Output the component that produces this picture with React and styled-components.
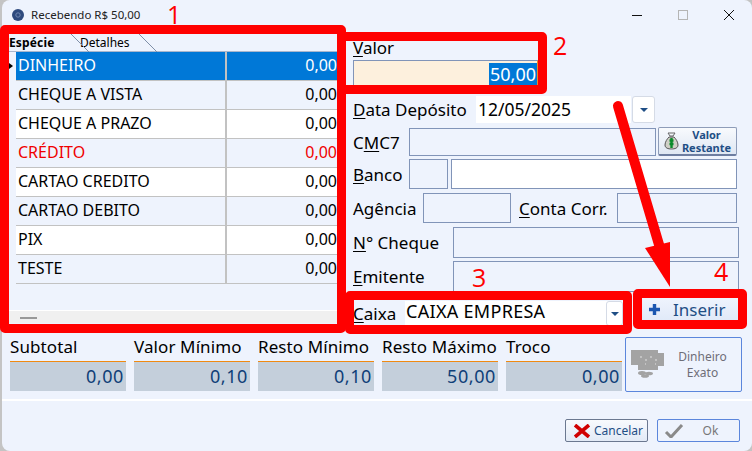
import React from "react";
import styled, { createGlobalStyle } from "styled-components";

const Global = createGlobalStyle`
  html, body { margin: 0; padding: 0; background: #c4c4c4; overflow: hidden; }
  * { box-sizing: border-box; }
`;
const UI = `"Noto Sans", "Open Sans", sans-serif`;

const Win = styled.div`
  position: relative; width: 750px; height: 451px; margin-left: 2px; background: #eef3fd;
  border-radius: 8px;
  font-family: ${UI}; font-size: 17px; color: #000; display: flex; flex-direction: column;
`;
const TitleBar = styled.div`
  height: 30px; flex: none; display: flex; align-items: center; padding-left: 10px;
  font-size: 11.5px; color: #222; gap: 7px;
`;
const TitleText = styled.span`flex: 1; margin-top: -1px;`;
const Ctl = styled.svg`width: 12px; height: 12px; margin-right: ${p => p.$mr}px; flex: none;`;
const Main = styled.div`height: 304px; flex: none; display: flex; padding: 4px 0 0 7px;`;
const Left = styled.div`width: 329px; height: 289px; display: flex; flex-direction: column; flex: none; position: relative; font-size: 16px;`;
const Tabs = styled.div`height: 18px; flex: none; display: flex; align-items: center; font-size: 12px; position: relative; border-bottom: 1px solid #a9b6cc;`;
const Tab = styled.span`width: ${p => p.$w}px; flex: none; font-weight: ${p => p.$on ? 700 : 400}; margin-top: -1px; letter-spacing: ${p => p.$on ? ".15px" : 0};`;
const TabCut = styled.svg`position: absolute; top: 0; left: 0; width: 160px; height: 18px;`;
const GridWrap = styled.div`flex: 1; padding-left: 7px; display: flex; flex-direction: column;`;
const Row = styled.div`
  height: 29px; flex: none; display: flex; align-items: center; border-bottom: 1px solid #c2c2c2; position: relative;
  background: ${p => p.$sel ? "#0078d7" : p.$odd ? "#eef3fd" : "#fff"};
  color: ${p => p.$sel ? "#fff" : p.$red ? "#f00000" : "#000"};
`;
const Name = styled.span`width: 211px; height: 100%; padding: 0 0 2px 2px; display: flex; align-items: center; border-right: 2px solid #c2c2c2; flex: none; white-space: nowrap;`;
const Val = styled.span`flex: 1; text-align: right; padding: 0 1px 2px 0;`;
const Marker = styled.i`position: absolute; left: -7px; top: 11px; border-left: 4px solid #000; border-top: 3px solid transparent; border-bottom: 3px solid transparent;`;
const Scroll = styled.div`height: 13px; margin-top: auto; background: #f0f0f0; border-top: 1px solid #fff; position: relative; flex: none; margin-left: -7px; padding: 6px 0 0 11px;`;
const Thumb = styled.div`width: 17px; height: 2px; background: #999;`;

const Right = styled.div`margin-left: 15px; width: 386px; flex: none; display: flex; flex-direction: column;`;
const FormRow = styled.div`height: ${p => p.$h}px; margin-top: ${p => p.$top}px; display: flex; flex: none; align-items: stretch;`;
const Label = styled.span`width: ${p => p.$w}px; flex: none; white-space: nowrap; display: flex; align-items: center; padding-left: ${p => p.$pl || 0}px; & u { text-underline-offset: 2px; }`;
const Input = styled.div`
  width: ${p => p.$w ? p.$w + "px" : "auto"}; flex: ${p => p.$w ? "none" : 1};
  margin-left: ${p => p.$ml || 0}px; border: 1px solid #8194b8;
  background: ${p => p.$white ? "#fff" : "#eef3fd"};
`;
const ValorLabel = styled.div`height: 18px; margin-top: 7px; line-height: 14px; flex: none; & u { text-underline-offset: 2px; }`;
const ValorInput = styled.div`height: 27px; width: 185px; margin-top: 1px; flex: none; background: #fdf0dd; border: 1px solid #8194b8; border-bottom: 0; border-right: 1px solid #e8892c; display: flex; justify-content: flex-end; padding: 2px 0 1px;`;
const Selected = styled.span`background: #0078d7; color: #fff; padding: 0 1px; font-size: 18px; line-height: 23px;`;
const DateField = styled.div`width: 155px; margin-left: 6px; background: #fff; display: flex; align-items: center; padding: 0 0 2px 2px; flex: none; font-size: 17.5px;`;
const Drop = styled.div`width: ${p => p.$w}px; flex: none; background: #fff; border: 1px solid #d5dbe6; border-radius: 3px; display: flex; align-items: center; justify-content: center; margin-left: ${p => p.$ml || 0}px;`;
const Caret = styled.i`border-top: 4px solid #1f4e85; border-left: 4px solid transparent; border-right: 4px solid transparent;`;
const RestanteBtn = styled.button`
  width: 79px; margin: -1px 0 0 2px; flex: none; padding: 0 2px 0 5px; display: flex; align-items: center; font: 700 11px ${UI}; color: #1f4e85; line-height: 13px;
  background: linear-gradient(#f8fafd, #dfe7f3); border: 1px solid #8e9cb8; border-bottom: 2px solid #6d7da0; border-radius: 2px;
`;
const BtnTxt = styled.span`flex: 1; text-align: center;`;
const CaixaText = styled.div`width: 218px; background: #fff; display: flex; flex: none;`;
const CaixaValue = styled.span`flex: 1; padding: 0 0 3px 1px; font-size: 18px; letter-spacing: .3px; line-height: 20px; white-space: nowrap;`;
const Inserir = styled.button`
  width: 96px; height: 22px; margin: -2px 0 0 19px; border: 0; flex: none; background: linear-gradient(#eef3fd, #e0e9f8);
  display: flex; align-items: center; gap: 12px; padding: 0 0 2px 6px; font: 17px ${UI}; color: #1f4e85;
`;

const Stats = styled.div`height: 66px; flex: none; display: flex; gap: 8px; padding: 3px 0 0 8px; border-bottom: 1px solid #fff; box-shadow: 0 1px 0 #fff;`;
const Stat = styled.div`width: 116px; flex: none; display: flex; flex-direction: column;`;
const StatLabel = styled.div`height: 25px; line-height: 20px; white-space: nowrap; letter-spacing: .1px; border-bottom: 1px solid #f08a12; flex: none;`;
const StatVal = styled.div`height: 29px; background: #c4cfdb; color: #0f3f78; text-align: right; padding: 2px 2px 0 0; font-size: 18px; letter-spacing: .6px; line-height: 24px; flex: none;`;
const Exato = styled.button`
  width: 117px; height: 55px; margin: 0 0 0 -5px; flex: none; background: #eef3fd; border: 1px solid #5b86dc; border-radius: 2px;
  display: flex; align-items: center; padding: 0 0 0 5px; font: 12px/16px ${UI}; color: #6e6e78;
`;
const BillsIcon = styled.svg`width: 33px; height: 29px; flex: none; margin-top: -3px;`;
const Footer = styled.div`flex: 1; display: flex; justify-content: flex-end; padding: 19px 12px 0 0; gap: 9px;`;
const ActBtn = styled.button`
  width: 83px; height: 23px; display: flex; align-items: center; padding: 0 4px 0 6px; gap: 2px; font: 12px ${UI}; flex: none; border-radius: 2px;
  color: ${p => p.$off ? "#777" : "#1f4e85"};
  background: ${p => p.$off ? "#eef3fd" : "linear-gradient(#f8fafd,#e2eaf6)"};
  border: 1px solid ${p => p.$off ? "#5b86dc" : "#6b7890"};
`;
const ActLabel = styled.span`flex: 1; text-align: center;`;

const Frame = styled.div`
  position: absolute; left: ${p => p.$x}px; top: ${p => p.$y}px; width: ${p => p.$w}px; height: ${p => p.$h}px;
  border: 9px solid #f00; border-left-width: ${p => p.$bl ?? 9}px; border-radius: 5px; pointer-events: none;
`;
const Num = styled.span`position: absolute; left: ${p => p.$x}px; top: ${p => p.$y}px; color: #f00; font: 25px/21px "Open Sans", sans-serif;`;
const Arrow = styled.svg`position: absolute; left: 598px; top: 90px; width: 90px; height: 210px; pointer-events: none;`;
const Spacer = styled.div`width: 2px; flex: none;`;

const rows = ["DINHEIRO","CHEQUE A VISTA","CHEQUE A PRAZO","CRÉDITO","CARTAO CREDITO","CARTAO DEBITO","PIX","TESTE"];
const stats = [["Subtotal","0,00"],["Valor Mínimo","0,10"],["Resto Mínimo","0,10"],["Resto Máximo","50,00"],["Troco","0,00"]];

const Bag = () => (
  <svg width="15" height="18" viewBox="0 0 15 18">
    <path d="M4 1h7l-2 3h-3z" fill="none" stroke="#666" strokeWidth="1"/>
    <path d="M5 5h5c2 2 4 5 4 8 0 3-3 4-6.500 4S1 16 1 13c0-3 2-6 4-8z" fill="#cfcfc6" stroke="#555" strokeWidth="1"/>
    <path d="M7.500 6v10M5.500 8.500h4M5.500 12h4" stroke="#0a8a2a" strokeWidth="2.400"/>
  </svg>
);
const Bills = () => (
  <BillsIcon viewBox="0 0 33 29">
    <path d="M0 1h27v3h6v13h-6v4h-20v-5h-7z" fill="#a3a3a3"/>
    <path d="M9 8h2M14 11h2M19 8h2M24 11h2M14 15h1M24 15h1" stroke="#e2e2e2" strokeWidth="1"/>
    <ellipse cx="11" cy="24" rx="4" ry="2" fill="#a3a3a3"/>
    <ellipse cx="14" cy="27" rx="4" ry="1.800" fill="#a3a3a3"/>
    <ellipse cx="18" cy="24.500" rx="4" ry="1.800" fill="#a3a3a3"/>
  </BillsIcon>
);

export default function App() {
  return (
    <>
      <Global />
      <Win>
        <TitleBar>
          <svg width="12" height="12" viewBox="0 0 12 12"><circle cx="6" cy="6" r="6" fill="#2e4a7d"/><circle cx="6" cy="6" r="2.200" fill="none" stroke="#6f86b0" strokeWidth="1"/></svg>
          <TitleText>Recebendo R$ 50,00</TitleText>
          <Ctl viewBox="0 0 12 12" $mr={27}><path d="M1 6.500h10" stroke="#111" strokeWidth="1"/></Ctl>
          <Ctl viewBox="0 0 12 12" $mr={27}><rect x="1.500" y="1.500" width="9" height="9" fill="none" stroke="#b5b5b5"/></Ctl>
          <Ctl viewBox="0 0 12 12" $mr={17}><path d="M1 1l10 10M11 1L1 11" stroke="#111" strokeWidth="1"/></Ctl>
        </TitleBar>
        <Main>
          <Left>
            <Tabs>
              <Tab $on $w={71}>Espécie</Tab>
              <Tab $w={80}>Detalhes</Tab>
              <TabCut viewBox="0 0 160 18"><path d="M62 0l18 18M130 0l18 18" stroke="#7f8fa8" fill="none"/></TabCut>
            </Tabs>
            <GridWrap>
              {rows.map((r, i) => (
                <Row key={r} $sel={i === 0} $odd={i % 2 === 1} $red={r === "CRÉDITO"}>
                  {i === 0 && <Marker />}
                  <Name>{r}</Name>
                  <Val>0,00</Val>
                </Row>
              ))}
              <Scroll><Thumb /></Scroll>
            </GridWrap>
          </Left>
          <Right>
            <ValorLabel><u>V</u>alor</ValorLabel>
            <ValorInput><Selected>50,00</Selected></ValorInput>
            <FormRow $h={27} $top={9}>
              <Label $w={117}><span><u>D</u>ata Depósito</span></Label>
              <DateField>12/05/2025</DateField>
              <Drop $w={23} $ml={1}><Caret /></Drop>
            </FormRow>
            <FormRow $h={28} $top={5}>
              <Label $w={56}><span>C<u>M</u>C7</span></Label>
              <Input />
              <RestanteBtn><Bag /><BtnTxt>Valor Restante</BtnTxt></RestanteBtn>
              <Spacer />
            </FormRow>
            <FormRow $h={30} $top={3}>
              <Label $w={56}><span><u>B</u>anco</span></Label>
              <Input $w={39} />
              <Input $ml={3} $white />
              <Spacer />
            </FormRow>
            <FormRow $h={30} $top={4}>
              <Label $w={70}>Agência</Label>
              <Input $w={88} />
              <Label $w={106} $pl={8}><span><u>C</u>onta Corr.</span></Label>
              <Input />
              <Spacer />
            </FormRow>
            <FormRow $h={31} $top={4}>
              <Label $w={100}><span><u>N</u>° Cheque</span></Label>
              <Input />
            </FormRow>
            <FormRow $h={31} $top={3}>
              <Label $w={100}><span><u>E</u>mitente</span></Label>
              <Input />
            </FormRow>
            <FormRow $h={25} $top={9}>
              <Label $w={52}><span><u>C</u>aixa</span></Label>
              <CaixaText><CaixaValue>CAIXA EMPRESA</CaixaValue><Drop $w={17}><Caret /></Drop></CaixaText>
              <Inserir>
                <svg width="13" height="13" viewBox="0 0 13 13"><path d="M6.500 1v11M1 6.500h11" stroke="#1a56b0" strokeWidth="3.400"/></svg>
                Inserir
              </Inserir>
            </FormRow>
          </Right>
        </Main>
        <Stats>
          {stats.map(([l, v]) => (
            <Stat key={l}><StatLabel>{l}</StatLabel><StatVal>{v}</StatVal></Stat>
          ))}
          <Exato><Bills /><BtnTxt>Dinheiro<br />Exato</BtnTxt></Exato>
        </Stats>
        <Footer>
          <ActBtn>
            <svg width="20" height="14" viewBox="0 0 20 14"><path d="M3 1l14 12M17 1L3 13" stroke="#d00000" strokeWidth="3.600"/></svg>
            <ActLabel>Cancelar</ActLabel>
          </ActBtn>
          <ActBtn $off>
            <svg width="20" height="14" viewBox="0 0 20 14"><path d="M2 8l5 5L18 1" fill="none" stroke="#8a8a8a" strokeWidth="3"/></svg>
            <ActLabel>Ok</ActLabel>
          </ActBtn>
        </Footer>

        <Frame $x={-2} $y={25} $w={346} $h={308} />
        <Frame $x={336} $y={32} $w={209} $h={62} $bl={8} />
        <Frame $x={343} $y={291} $w={287} $h={43} />
        <Frame $x={631} $y={289} $w={114} $h={40} />
        <Arrow viewBox="0 0 90 210">
          <path d="M18 16L60 158" stroke="#f00" strokeWidth="10" strokeLinecap="round"/>
          <path d="M45 158L70 152L70 197Z" fill="#f00"/>
        </Arrow>
        <Num $x={165} $y={4}>1</Num>
        <Num $x={551} $y={35}>2</Num>
        <Num $x={470} $y={267}>3</Num>
        <Num $x={712} $y={261}>4</Num>
      </Win>
    </>
  );
}
